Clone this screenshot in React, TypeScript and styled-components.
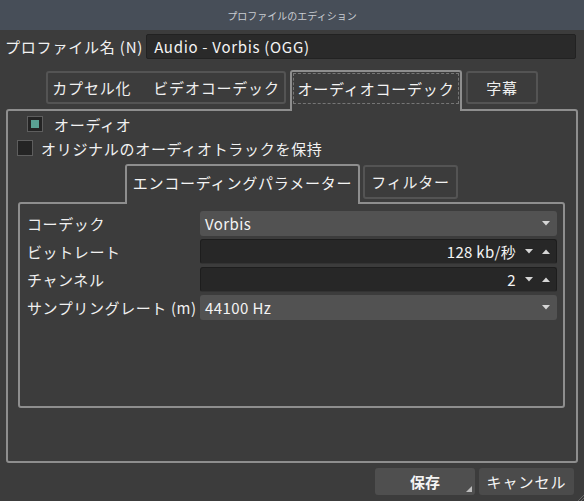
import React from "react";
import styled, { createGlobalStyle } from "styled-components";

const Global = createGlobalStyle`
  html, body { margin: 0; padding: 0; background: #3c3c3c; }
  body { font-family: "Noto Sans CJK JP", "Noto Sans", sans-serif; color: #f2f2f2; }
  * { box-sizing: border-box; }
`;

const Window = styled.div`
  width: 584px;
  height: 501px;
  display: flex;
  flex-direction: column;
  background: #3c3c3c;
  position: relative;
  overflow: hidden;
`;

const TitleBar = styled.div`
  height: 30px;
  flex: none;
  background: #474e58;
  display: flex;
  align-items: center;
  justify-content: center;
  font-size: 10px;
  color: #c9cdd3;
`;

const ProfileRow = styled.div`
  display: flex;
  align-items: center;
  gap: 3px;
  height: 25px;
  margin-top: 4px;
  padding: 0 8px 0 5px;
  font-size: 15px;
`;

const Jp = styled.span`
  letter-spacing: 0.8px;
  white-space: nowrap;
`;

const NameInput = styled.div`
  flex: 1;
  height: 25px;
  background: #2a2a2a;
  border: 1px solid #222;
  border-radius: 2px;
  display: flex;
  align-items: center;
  padding-left: 7px;
  font-size: 15px;
  letter-spacing: 0.7px;
  color: #f4f4f4;
`;

const TabBar = styled.div<{ $pad: number; $top: number; $gap: number }>`
  display: flex;
  align-items: flex-end;
  gap: ${(p) => p.$gap}px;
  padding-left: ${(p) => p.$pad}px;
  margin-top: ${(p) => p.$top}px;
  flex: none;
`;

const Tab = styled.div<{ $w: number; $h: number; $mb: number }>`
  width: ${(p) => p.$w}px;
  height: ${(p) => p.$h}px;
  margin-bottom: ${(p) => p.$mb}px;
  border: 2px solid #545454;
  border-radius: 3px;
  display: flex;
  align-items: center;
  justify-content: center;
  gap: 22px;
  font-size: 15px;
  letter-spacing: 0.8px;
  color: #f0f0f0;
  padding-bottom: 1px;
`;

const ActiveTab = styled.div<{ $w: number; $h: number }>`
  position: relative;
  z-index: 1;
  width: ${(p) => p.$w}px;
  height: ${(p) => p.$h}px;
  margin-bottom: -2px;
  border: 2px solid #8e8e8e;
  border-bottom: none;
  border-radius: 3px 3px 0 0;
  background: #3c3c3c;
  display: flex;
  flex-direction: column;
  padding: 1px 1px 0;
  font-size: 15px;
  letter-spacing: 0.8px;
  color: #f4f4f4;
`;

const FocusRect = styled.div<{ $focus?: boolean }>`
  height: 31px;
  display: flex;
  align-items: center;
  justify-content: center;
  border: 1px dashed ${(p) => (p.$focus ? "#767676" : "transparent")};
`;

const Panel = styled.div`
  flex: 1;
  margin: 0 6px;
  border: 2px solid #8e8e8e;
  border-radius: 3px;
  display: flex;
  flex-direction: column;
  padding-top: 3px;
`;

const CheckRow = styled.div<{ $indent: number; $gap: number; $mb: number }>`
  display: flex;
  align-items: center;
  height: 20px;
  padding-left: ${(p) => p.$indent}px;
  gap: ${(p) => p.$gap}px;
  font-size: 15px;
  letter-spacing: 0.7px;
  margin-bottom: ${(p) => p.$mb}px;
`;

const Check = styled.div<{ $on?: boolean }>`
  width: 16px;
  height: 16px;
  border: 1px solid #5e5e5e;
  background: #242424;
  display: flex;
  align-items: center;
  justify-content: center;
  &::after {
    content: "";
    width: 8px;
    height: 8px;
    background: ${(p) => (p.$on ? "#5aa193" : "transparent")};
  }
`;

const InnerPanel = styled.div`
  height: 206px;
  margin: 0 11px 0 10px;
  border: 2px solid #8e8e8e;
  border-radius: 3px;
  display: grid;
  grid-template-columns: 173px 1fr;
  grid-auto-rows: 25px;
  row-gap: 3px;
  align-content: start;
  padding: 7px 6px 0 7px;
`;

const FieldLabel = styled.div`
  display: flex;
  align-items: center;
  font-size: 15px;
  letter-spacing: 0.6px;
  white-space: nowrap;
  color: #f0f0f0;
`;

const Combo = styled.div`
  background: #525252;
  border-radius: 3px;
  display: flex;
  align-items: center;
  justify-content: space-between;
  padding: 0 7px 0 5px;
  font-size: 15px;
  letter-spacing: 0.4px;
  color: #f4f4f4;
`;

const Spin = styled.div`
  background: #272727;
  border: 1px solid #1d1d1d;
  border-bottom-color: #333;
  border-radius: 3px;
  display: flex;
  align-items: center;
  justify-content: flex-end;
  gap: 9px;
  padding: 0 6px 0 5px;
  font-size: 15px;
  letter-spacing: 0.3px;
  color: #f4f4f4;
`;

const Arrows = styled.div`
  display: flex;
  align-items: center;
  gap: 9px;
`;

const ButtonRow = styled.div`
  display: flex;
  justify-content: flex-end;
  gap: 4px;
  padding-right: 10px;
  margin: 5px 0 6px;
  flex: none;
`;

const Button = styled.div<{ $w: number; $bold?: boolean }>`
  position: relative;
  width: ${(p) => p.$w}px;
  height: 27px;
  background: ${(p) => (p.$bold ? "#4f4f4f" : "#4b4b4b")};
  border-radius: 3px;
  display: flex;
  align-items: center;
  justify-content: center;
  font-size: 15px;
  letter-spacing: ${(p) => (p.$bold ? 0 : 1)}px;
  font-weight: ${(p) => (p.$bold ? 700 : 400)};
  color: #f4f4f4;
`;

const MenuMark = styled.svg`
  position: absolute;
  right: 3px;
  bottom: 3px;
`;

const Grip = styled.svg`
  position: absolute;
  right: 0;
  bottom: 0;
`;

const Down = () => (
  <svg width="8" height="5" viewBox="0 0 8 5">
    <path d="M0 0 H8 L4 4.5 Z" fill="#d6d6d6" />
  </svg>
);
const Up = () => (
  <svg width="8" height="5" viewBox="0 0 8 5">
    <path d="M0 5 H8 L4 0.5 Z" fill="#d6d6d6" />
  </svg>
);

export default function App() {
  return (
    <Window>
      <Global />
      <TitleBar>プロファイルのエディション</TitleBar>
      <ProfileRow>
        <Jp>プロファイル名 (N)</Jp>
        <NameInput>Audio - Vorbis (OGG)</NameInput>
      </ProfileRow>
      <TabBar $pad={46} $top={11} $gap={4}>
        <Tab $w={240} $h={33} $mb={5}>
          <span>カプセル化</span>
          <span>ビデオコーデック</span>
        </Tab>
        <ActiveTab $w={172} $h={41}>
          <FocusRect $focus>オーディオコーデック</FocusRect>
        </ActiveTab>
        <Tab $w={72} $h={33} $mb={5}>字幕</Tab>
      </TabBar>
      <Panel>
        <CheckRow $indent={19} $gap={11} $mb={4}>
          <Check $on />
          <span>オーディオ</span>
        </CheckRow>
        <CheckRow $indent={9} $gap={8} $mb={2}>
          <Check />
          <span>オリジナルのオーディオトラックを保持</span>
        </CheckRow>
        <TabBar $pad={117} $top={4} $gap={3}>
          <ActiveTab $w={235} $h={40}>
            <FocusRect>エンコーディングパラメーター</FocusRect>
          </ActiveTab>
          <Tab $w={95} $h={34} $mb={3}>フィルター</Tab>
        </TabBar>
        <InnerPanel>
          <FieldLabel>コーデック</FieldLabel>
          <Combo>
            <span>Vorbis</span>
            <Down />
          </Combo>
          <FieldLabel>ビットレート</FieldLabel>
          <Spin>
            <span>128 kb/秒</span>
            <Arrows>
              <Down />
              <Up />
            </Arrows>
          </Spin>
          <FieldLabel>チャンネル</FieldLabel>
          <Spin>
            <span>2</span>
            <Arrows>
              <Down />
              <Up />
            </Arrows>
          </Spin>
          <FieldLabel>サンプリングレート (m)</FieldLabel>
          <Combo>
            <span>44100 Hz</span>
            <Down />
          </Combo>
        </InnerPanel>
      </Panel>
      <ButtonRow>
        <Button $w={100} $bold>
          保存
          <MenuMark width="6" height="6" viewBox="0 0 6 6">
            <path d="M6 0 V6 H0 Z" fill="#bdbdbd" />
          </MenuMark>
        </Button>
        <Button $w={95}>キャンセル</Button>
      </ButtonRow>
      <Grip width="7" height="7" viewBox="0 0 7 7">
        <path d="M7 1 L1 7 M7 4 L4 7" stroke="#6a6a6a" strokeWidth="1" />
      </Grip>
    </Window>
  );
}
